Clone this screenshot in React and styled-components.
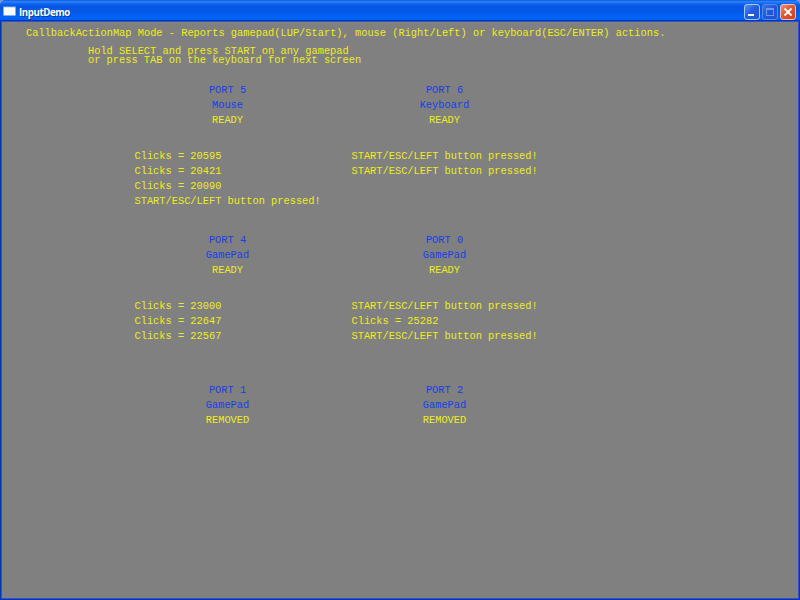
import React from "react";
import styled, { createGlobalStyle } from "styled-components";

const GlobalStyle = createGlobalStyle`
  * { box-sizing: border-box; }
  body { margin: 0; overflow: hidden; background: #7b96df; }
`;

const Window = styled.div`
  width: 800px;
  height: 600px;
  display: flex;
  flex-direction: column;
  overflow: hidden;
  border-radius: 6px 6px 0 0;
  background: #0b50e0;
`;

const TitleBar = styled.header`
  height: 22px;
  flex: none;
  display: flex;
  align-items: center;
  padding: 1px 4px 0 3px;
  background: linear-gradient(
    to bottom,
    #0a4bd0 0,
    #2b7df8 1px,
    #2480fb 2px,
    #0f62ec 4px,
    #0556e2 7px,
    #0559ea 12px,
    #0364fa 17px,
    #0262f6 19px,
    #0450d2 22px
  );
`;

const AppIcon = styled.svg`
  width: 13px;
  height: 11px;
  flex: none;
  margin: 0 3px 2px 0;
`;

const Title = styled.h1`
  margin: 2px auto 0 0;
  color: #fff;
  font: bold 9.7px/14px "Open Sans", "Noto Sans", sans-serif;
  letter-spacing: -0.42px;
  text-shadow: 1px 1px 0 #0b3a9c;
`;

const Controls = styled.div`
  display: flex;
  gap: 2px;
`;

const ControlButton = styled.button`
  width: 16px;
  height: 16px;
  padding: 0;
  display: flex;
  border: 1px solid ${(p) => p.$edge};
  border-radius: 3px;
  background: ${(p) => p.$fill};
  svg { width: 14px; height: 14px; display: block; }
`;

const Client = styled.main`
  flex: 1;
  margin: 0 2px 2px;
  background: #808080;
  box-shadow: 0 0 0 1px #2a56c8, 0 0 0 2px #0834b4;
  font: 10.35px/15px "Liberation Mono", "Courier New", monospace;
  white-space: pre;
  color: #eded1c;
  padding-top: 4px;
`;

const Heading = styled.p`
  margin: 0 0 0 24px;
`;

const Instructions = styled.p`
  margin: 6px 0 0 86px;
  line-height: 9px;
`;

const PortGrid = styled.section`
  display: grid;
  grid-template-columns: 187px 187px;
  grid-auto-rows: 150px;
  column-gap: 30px;
  margin: 18px 0 0 132.5px;
`;

const PortPanel = styled.article`
  min-width: 0;
`;

const PortHeader = styled.div`
  text-align: center;
  margin: 0 1px 21px 0;
`;

const PortLine = styled.div`
  color: ${(p) => (p.$device ? "#173fe6" : "#eded1c")};
`;

const PRESSED = "START/ESC/LEFT button pressed!";

const ports = [
  { port: 5, device: "Mouse", status: "READY", log: ["Clicks = 20595", "Clicks = 20421", "Clicks = 20090", PRESSED] },
  { port: 6, device: "Keyboard", status: "READY", log: [PRESSED, PRESSED] },
  { port: 4, device: "GamePad", status: "READY", log: ["Clicks = 23000", "Clicks = 22647", "Clicks = 22567"] },
  { port: 0, device: "GamePad", status: "READY", log: [PRESSED, "Clicks = 25282", PRESSED] },
  { port: 1, device: "GamePad", status: "REMOVED", log: [] },
  { port: 2, device: "GamePad", status: "REMOVED", log: [] },
];

const BLUE = "linear-gradient(135deg, #5c90f0, #245de0 45%, #1b54d6)";
const DIM = "linear-gradient(135deg, #3d73e4, #1e57da 50%, #1d55d3)";
const RED = "linear-gradient(135deg, #ec9275, #de5735 45%, #cc4120)";

export default function App() {
  return (
    <Window>
      <GlobalStyle />
      <TitleBar>
        <AppIcon viewBox="0 0 13 11">
          <rect x="0.5" y="1.5" width="12" height="9" fill="#fff" />
          <rect x="0.5" y="1" width="12" height="1.5" fill="#3e86ee" />
          <rect x="1" y="2.5" width="11" height="7" fill="#fff" />
        </AppIcon>
        <Title>InputDemo</Title>
        <Controls>
          <ControlButton $edge="#a9c5f8" $fill={BLUE} aria-label="Minimize">
            <svg viewBox="0 0 14 14"><rect x="3" y="9" width="6" height="2" fill="#fff" /></svg>
          </ControlButton>
          <ControlButton $edge="#5888e8" $fill={DIM} aria-label="Maximize">
            <svg viewBox="0 0 14 14">
              <rect x="3.5" y="3.5" width="7" height="7" fill="none" stroke="#7099ea" />
              <path d="M3 4h8" stroke="#7099ea" strokeWidth="2" />
            </svg>
          </ControlButton>
          <ControlButton $edge="#efc1b8" $fill={RED} aria-label="Close">
            <svg viewBox="0 0 14 14"><path d="M3.5 3.5l7 7M10.5 3.5l-7 7" stroke="#fff" strokeWidth="1.8" /></svg>
          </ControlButton>
        </Controls>
      </TitleBar>
      <Client>
        <Heading>
          CallbackActionMap Mode - Reports gamepad(LUP/Start), mouse (Right/Left) or keyboard(ESC/ENTER) actions.
        </Heading>
        <Instructions>
          {"Hold SELECT and press START on any gamepad\nor press TAB on the keyboard for next screen"}
        </Instructions>
        <PortGrid>
          {ports.map((p) => (
            <PortPanel key={p.port}>
              <PortHeader>
                <PortLine $device>{`PORT ${p.port}`}</PortLine>
                <PortLine $device>{p.device}</PortLine>
                <PortLine>{p.status}</PortLine>
              </PortHeader>
              {p.log.map((line, i) => (
                <PortLine key={i}>{line}</PortLine>
              ))}
            </PortPanel>
          ))}
        </PortGrid>
      </Client>
    </Window>
  );
}
